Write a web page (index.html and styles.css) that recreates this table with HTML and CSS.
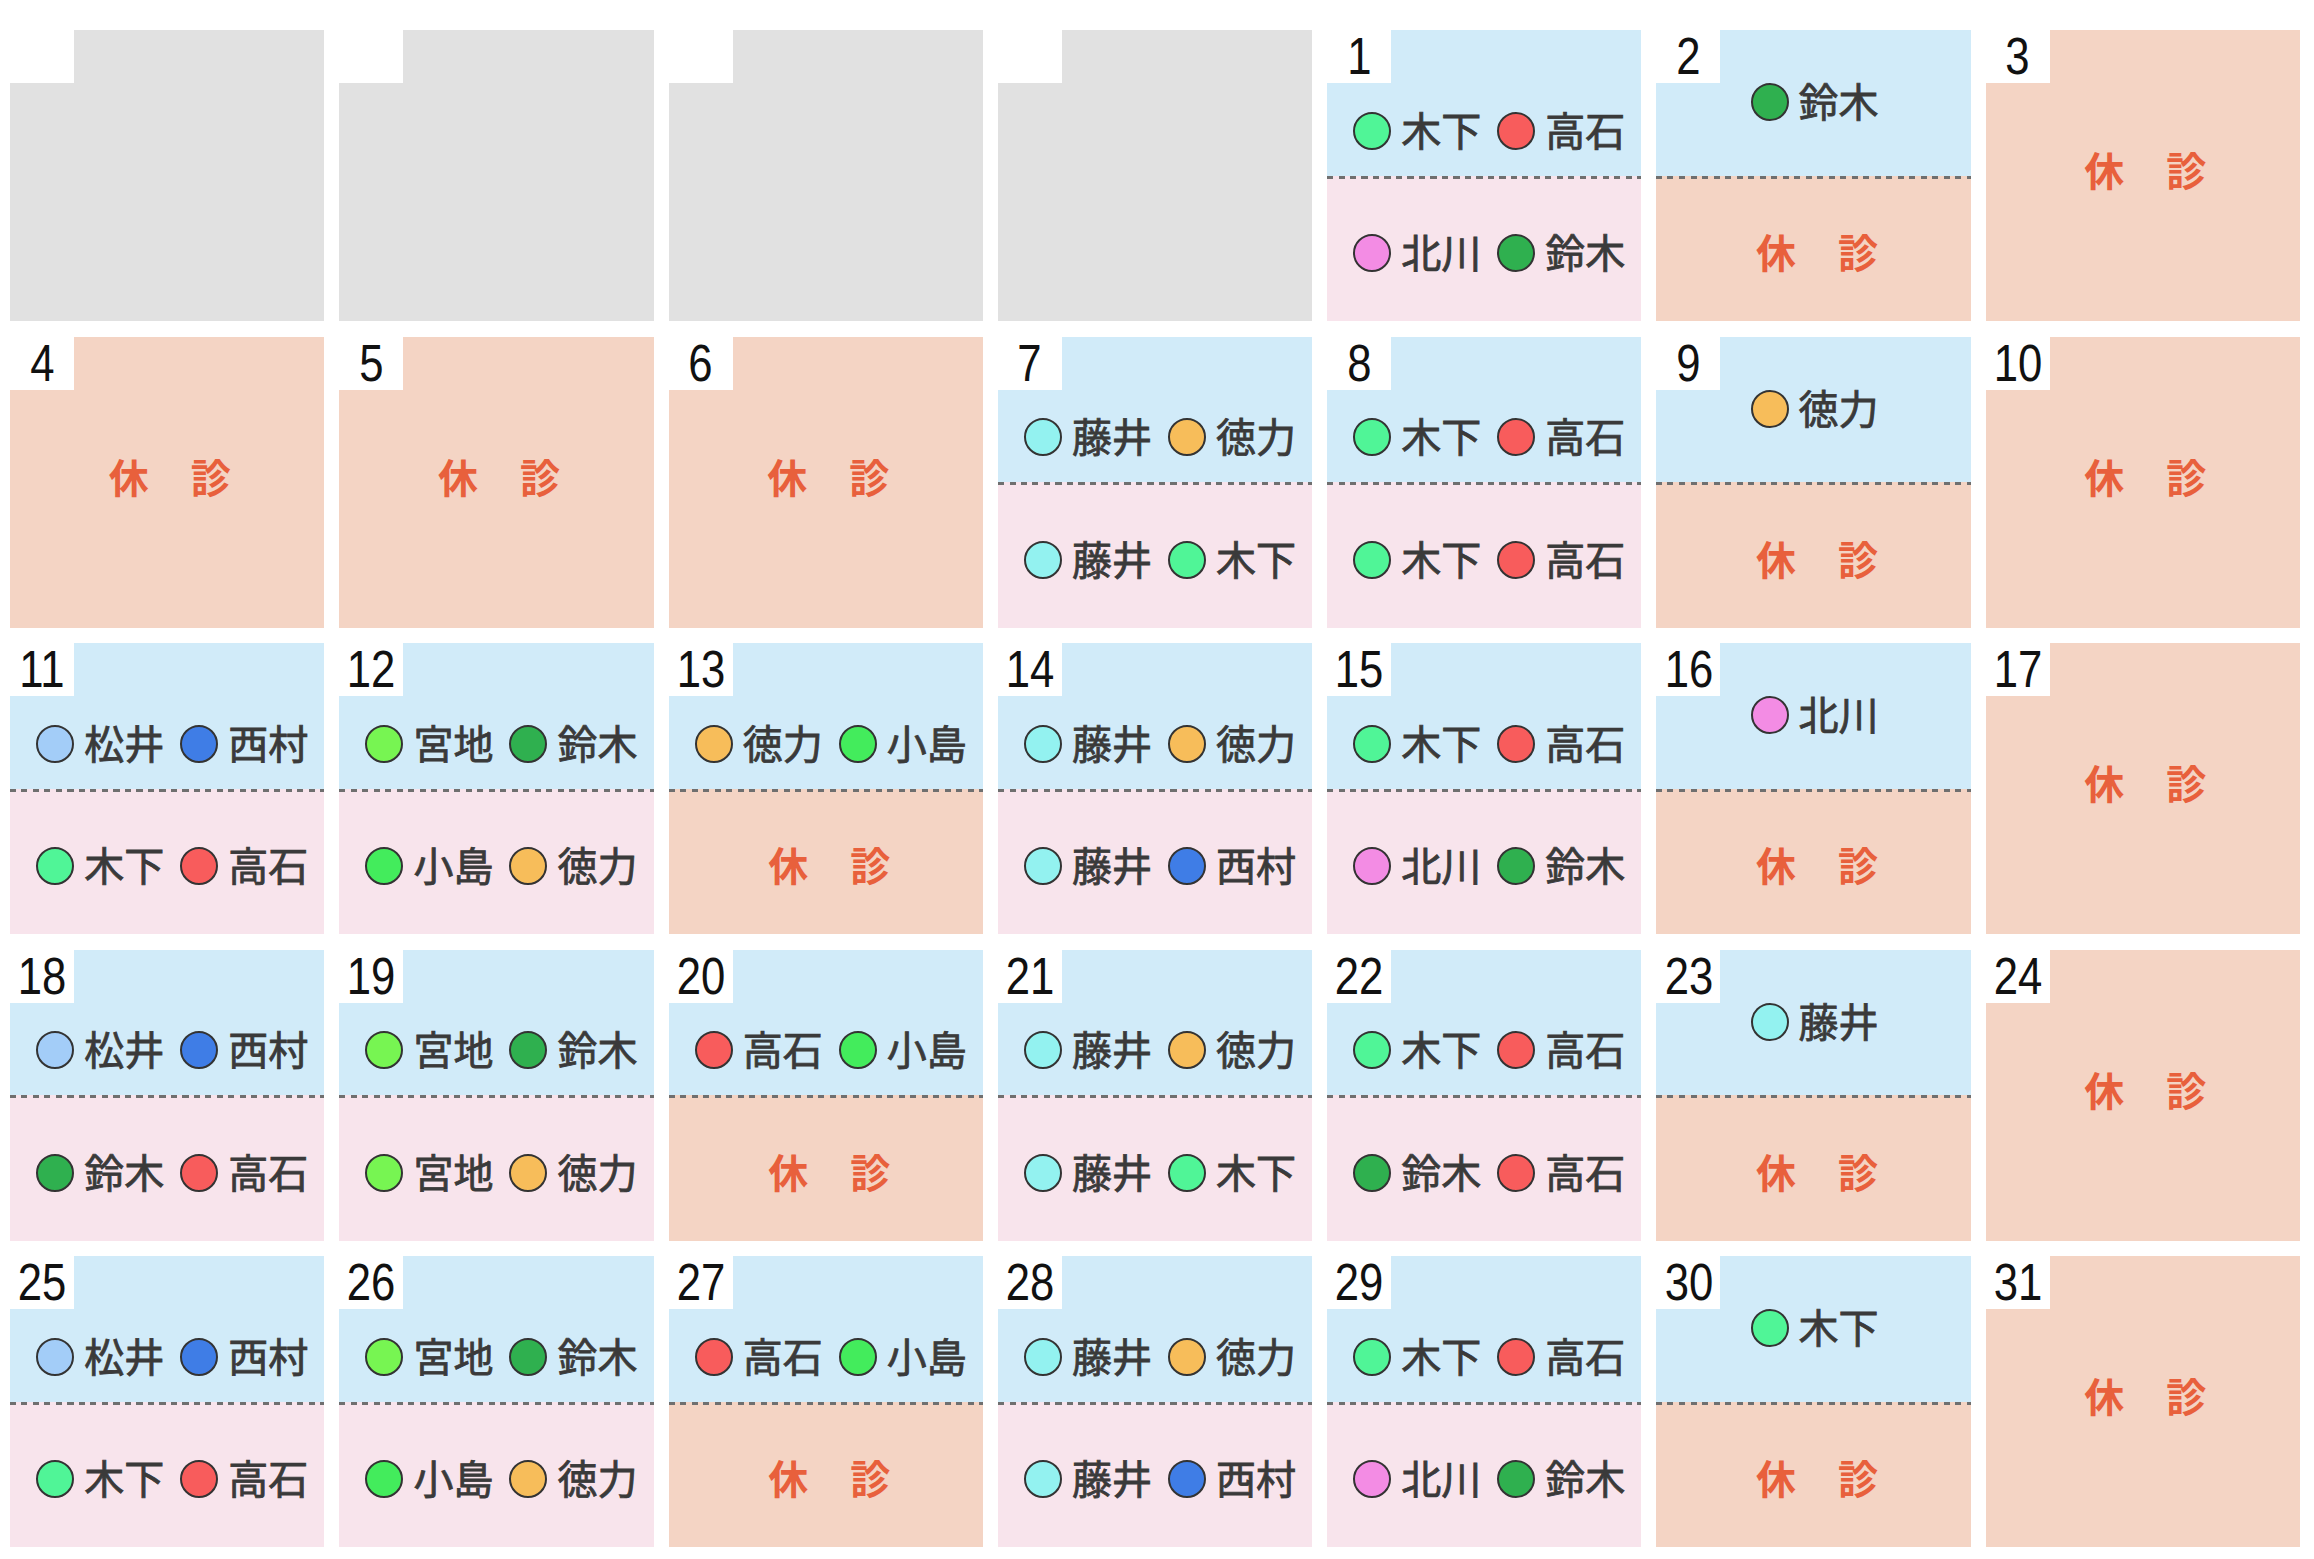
FILE: index.html
```html
<!DOCTYPE html>
<html lang="ja">
<head>
<meta charset="utf-8">
<title>診療カレンダー</title>
<link rel="stylesheet" href="styles.css">
</head>
<body>
<div class="cal">
  <div class="cell empty"><span class="num"></span></div>
  <div class="cell empty"><span class="num"></span></div>
  <div class="cell empty"><span class="num"></span></div>
  <div class="cell empty"><span class="num"></span></div>

  <div class="cell split"><span class="num"><b>1</b></span>
    <div class="half am two"><span class="doc"><i class="dot c-kinoshita"></i>木下</span><span class="doc"><i class="dot c-takaishi"></i>高石</span></div>
    <div class="half pm"><span class="doc"><i class="dot c-kitagawa"></i>北川</span><span class="doc"><i class="dot c-suzuki"></i>鈴木</span></div>
  </div>
  <div class="cell split"><span class="num"><b>2</b></span>
    <div class="half am one"><span class="doc"><i class="dot c-suzuki"></i>鈴木</span></div>
    <div class="half pm off"><span class="kyu">休　診</span></div>
  </div>
  <div class="cell closed"><span class="num"><b>3</b></span><span class="kyu">休　診</span></div>

  <div class="cell closed"><span class="num"><b>4</b></span><span class="kyu">休　診</span></div>
  <div class="cell closed"><span class="num"><b>5</b></span><span class="kyu">休　診</span></div>
  <div class="cell closed"><span class="num"><b>6</b></span><span class="kyu">休　診</span></div>
  <div class="cell split"><span class="num"><b>7</b></span>
    <div class="half am two"><span class="doc"><i class="dot c-fujii"></i>藤井</span><span class="doc"><i class="dot c-tokuriki"></i>徳力</span></div>
    <div class="half pm"><span class="doc"><i class="dot c-fujii"></i>藤井</span><span class="doc"><i class="dot c-kinoshita"></i>木下</span></div>
  </div>
  <div class="cell split"><span class="num"><b>8</b></span>
    <div class="half am two"><span class="doc"><i class="dot c-kinoshita"></i>木下</span><span class="doc"><i class="dot c-takaishi"></i>高石</span></div>
    <div class="half pm"><span class="doc"><i class="dot c-kinoshita"></i>木下</span><span class="doc"><i class="dot c-takaishi"></i>高石</span></div>
  </div>
  <div class="cell split"><span class="num"><b>9</b></span>
    <div class="half am one"><span class="doc"><i class="dot c-tokuriki"></i>徳力</span></div>
    <div class="half pm off"><span class="kyu">休　診</span></div>
  </div>
  <div class="cell closed"><span class="num"><b>10</b></span><span class="kyu">休　診</span></div>

  <div class="cell split"><span class="num"><b>11</b></span>
    <div class="half am two"><span class="doc"><i class="dot c-matsui"></i>松井</span><span class="doc"><i class="dot c-nishimura"></i>西村</span></div>
    <div class="half pm"><span class="doc"><i class="dot c-kinoshita"></i>木下</span><span class="doc"><i class="dot c-takaishi"></i>高石</span></div>
  </div>
  <div class="cell split"><span class="num"><b>12</b></span>
    <div class="half am two"><span class="doc"><i class="dot c-miyaji"></i>宮地</span><span class="doc"><i class="dot c-suzuki"></i>鈴木</span></div>
    <div class="half pm"><span class="doc"><i class="dot c-kojima"></i>小島</span><span class="doc"><i class="dot c-tokuriki"></i>徳力</span></div>
  </div>
  <div class="cell split"><span class="num"><b>13</b></span>
    <div class="half am two"><span class="doc"><i class="dot c-tokuriki"></i>徳力</span><span class="doc"><i class="dot c-kojima"></i>小島</span></div>
    <div class="half pm off"><span class="kyu">休　診</span></div>
  </div>
  <div class="cell split"><span class="num"><b>14</b></span>
    <div class="half am two"><span class="doc"><i class="dot c-fujii"></i>藤井</span><span class="doc"><i class="dot c-tokuriki"></i>徳力</span></div>
    <div class="half pm"><span class="doc"><i class="dot c-fujii"></i>藤井</span><span class="doc"><i class="dot c-nishimura"></i>西村</span></div>
  </div>
  <div class="cell split"><span class="num"><b>15</b></span>
    <div class="half am two"><span class="doc"><i class="dot c-kinoshita"></i>木下</span><span class="doc"><i class="dot c-takaishi"></i>高石</span></div>
    <div class="half pm"><span class="doc"><i class="dot c-kitagawa"></i>北川</span><span class="doc"><i class="dot c-suzuki"></i>鈴木</span></div>
  </div>
  <div class="cell split"><span class="num"><b>16</b></span>
    <div class="half am one"><span class="doc"><i class="dot c-kitagawa"></i>北川</span></div>
    <div class="half pm off"><span class="kyu">休　診</span></div>
  </div>
  <div class="cell closed"><span class="num"><b>17</b></span><span class="kyu">休　診</span></div>

  <div class="cell split"><span class="num"><b>18</b></span>
    <div class="half am two"><span class="doc"><i class="dot c-matsui"></i>松井</span><span class="doc"><i class="dot c-nishimura"></i>西村</span></div>
    <div class="half pm"><span class="doc"><i class="dot c-suzuki"></i>鈴木</span><span class="doc"><i class="dot c-takaishi"></i>高石</span></div>
  </div>
  <div class="cell split"><span class="num"><b>19</b></span>
    <div class="half am two"><span class="doc"><i class="dot c-miyaji"></i>宮地</span><span class="doc"><i class="dot c-suzuki"></i>鈴木</span></div>
    <div class="half pm"><span class="doc"><i class="dot c-miyaji"></i>宮地</span><span class="doc"><i class="dot c-tokuriki"></i>徳力</span></div>
  </div>
  <div class="cell split"><span class="num"><b>20</b></span>
    <div class="half am two"><span class="doc"><i class="dot c-takaishi"></i>高石</span><span class="doc"><i class="dot c-kojima"></i>小島</span></div>
    <div class="half pm off"><span class="kyu">休　診</span></div>
  </div>
  <div class="cell split"><span class="num"><b>21</b></span>
    <div class="half am two"><span class="doc"><i class="dot c-fujii"></i>藤井</span><span class="doc"><i class="dot c-tokuriki"></i>徳力</span></div>
    <div class="half pm"><span class="doc"><i class="dot c-fujii"></i>藤井</span><span class="doc"><i class="dot c-kinoshita"></i>木下</span></div>
  </div>
  <div class="cell split"><span class="num"><b>22</b></span>
    <div class="half am two"><span class="doc"><i class="dot c-kinoshita"></i>木下</span><span class="doc"><i class="dot c-takaishi"></i>高石</span></div>
    <div class="half pm"><span class="doc"><i class="dot c-suzuki"></i>鈴木</span><span class="doc"><i class="dot c-takaishi"></i>高石</span></div>
  </div>
  <div class="cell split"><span class="num"><b>23</b></span>
    <div class="half am one"><span class="doc"><i class="dot c-fujii"></i>藤井</span></div>
    <div class="half pm off"><span class="kyu">休　診</span></div>
  </div>
  <div class="cell closed"><span class="num"><b>24</b></span><span class="kyu">休　診</span></div>

  <div class="cell split"><span class="num"><b>25</b></span>
    <div class="half am two"><span class="doc"><i class="dot c-matsui"></i>松井</span><span class="doc"><i class="dot c-nishimura"></i>西村</span></div>
    <div class="half pm"><span class="doc"><i class="dot c-kinoshita"></i>木下</span><span class="doc"><i class="dot c-takaishi"></i>高石</span></div>
  </div>
  <div class="cell split"><span class="num"><b>26</b></span>
    <div class="half am two"><span class="doc"><i class="dot c-miyaji"></i>宮地</span><span class="doc"><i class="dot c-suzuki"></i>鈴木</span></div>
    <div class="half pm"><span class="doc"><i class="dot c-kojima"></i>小島</span><span class="doc"><i class="dot c-tokuriki"></i>徳力</span></div>
  </div>
  <div class="cell split"><span class="num"><b>27</b></span>
    <div class="half am two"><span class="doc"><i class="dot c-takaishi"></i>高石</span><span class="doc"><i class="dot c-kojima"></i>小島</span></div>
    <div class="half pm off"><span class="kyu">休　診</span></div>
  </div>
  <div class="cell split"><span class="num"><b>28</b></span>
    <div class="half am two"><span class="doc"><i class="dot c-fujii"></i>藤井</span><span class="doc"><i class="dot c-tokuriki"></i>徳力</span></div>
    <div class="half pm"><span class="doc"><i class="dot c-fujii"></i>藤井</span><span class="doc"><i class="dot c-nishimura"></i>西村</span></div>
  </div>
  <div class="cell split"><span class="num"><b>29</b></span>
    <div class="half am two"><span class="doc"><i class="dot c-kinoshita"></i>木下</span><span class="doc"><i class="dot c-takaishi"></i>高石</span></div>
    <div class="half pm"><span class="doc"><i class="dot c-kitagawa"></i>北川</span><span class="doc"><i class="dot c-suzuki"></i>鈴木</span></div>
  </div>
  <div class="cell split"><span class="num"><b>30</b></span>
    <div class="half am one"><span class="doc"><i class="dot c-kinoshita"></i>木下</span></div>
    <div class="half pm off"><span class="kyu">休　診</span></div>
  </div>
  <div class="cell closed"><span class="num"><b>31</b></span><span class="kyu">休　診</span></div>
</div>
</body>
</html>
```

FILE: styles.css
```css
html, body {
  margin: 0;
  background: #ffffff;
}

.cal {
  display: grid;
  grid-template-columns: repeat(7, 1fr);
  grid-auto-rows: 291px;
  column-gap: 15px;
  row-gap: 15.5px;
  padding: 30px 14px 0 10px;
}

.cell {
  position: relative;
  display: flex;
  flex-direction: column;
  box-sizing: border-box;
}

.cell.empty {
  background: #e1e1e1;
}

.cell.closed {
  background: #f4d4c4;
  align-items: center;
  justify-content: center;
  padding: 0 0 13px 6px;
}

.num {
  position: absolute;
  left: 0;
  top: 0;
  width: 64px;
  height: 53px;
  background: #ffffff;
  color: #111111;
  font-family: "Liberation Sans", sans-serif;
  font-size: 52px;
  line-height: 53px;
  text-align: center;
  z-index: 1;
}

.num b {
  display: inline-block;
  font-weight: 400;
  transform: scaleX(0.84);
  transform-origin: 50% 50%;
}

.half {
  flex: 0 0 50%;
  box-sizing: border-box;
  display: flex;
  align-items: center;
  justify-content: center;
  padding-left: 10px;
}

.am {
  background: #d1ebf9;
}

.am.two {
  padding-top: 52px;
}

.am.one {
  padding-left: 2px;
  padding-bottom: 5px;
}

.pm {
  background: repeating-linear-gradient(90deg, #6f6f6f 0 6px, transparent 6px 11.5px) left top / 100% 3px no-repeat, #f8e4ec;
  padding-top: 6px;
}

.pm.off {
  background: repeating-linear-gradient(90deg, #6f6f6f 0 6px, transparent 6px 11.5px) left top / 100% 3px no-repeat, #f4d4c4;
  padding-left: 8px;
}

.doc {
  display: flex;
  align-items: center;
  gap: 10px;
  font-family: "Noto Sans CJK JP", "Noto Sans", sans-serif;
  font-weight: 400;
  font-size: 40px;
  line-height: 1;
  color: #3a3a3a;
  -webkit-text-stroke: 0.8px #3a3a3a;
}

.doc + .doc {
  margin-left: 16px;
}

.dot {
  display: block;
  width: 34px;
  height: 34px;
  border: 2px solid #333333;
  border-radius: 50%;
  margin-top: 4px;
}

.kyu {
  font-family: "Noto Sans CJK JP", "Noto Sans", sans-serif;
  font-weight: 700;
  font-size: 40px;
  line-height: 1;
  letter-spacing: 1px;
  color: #e8603c;
  white-space: pre;
}

.c-kinoshita { background: #50f597; }
.c-takaishi { background: #f85c5c; }
.c-kitagawa { background: #f38ce4; }
.c-suzuki { background: #2fb04f; }
.c-fujii { background: #93f2f0; }
.c-tokuriki { background: #f7bd5a; }
.c-matsui { background: #a3cdf8; }
.c-nishimura { background: #3f7de6; }
.c-miyaji { background: #77f552; }
.c-kojima { background: #43ec5c; }
```
